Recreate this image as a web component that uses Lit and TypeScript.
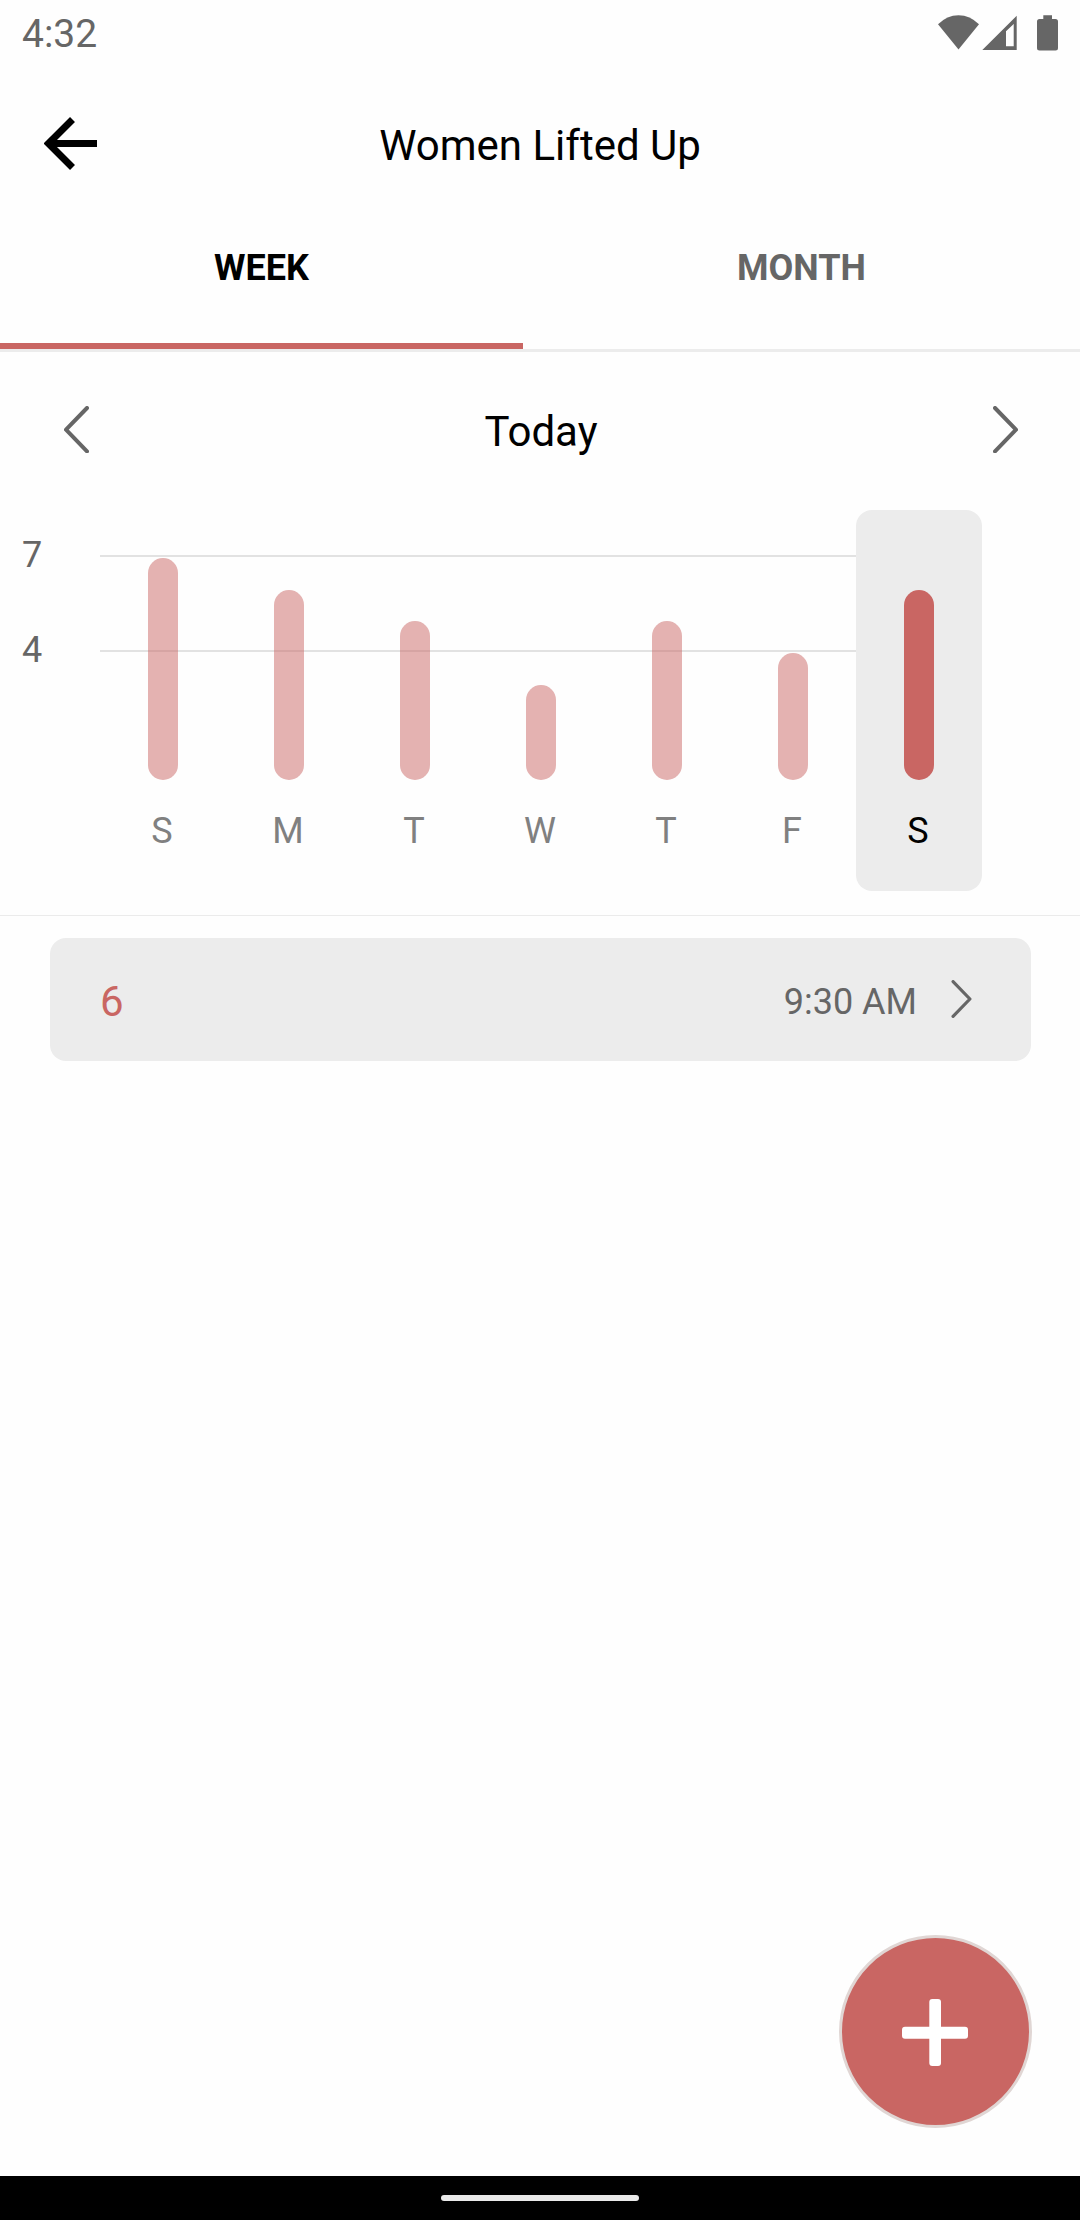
import { LitElement, html, css, svg } from "lit";
import { customElement, state } from "lit/decorators.js";
import { classMap } from "lit/directives/class-map.js";
import { styleMap } from "lit/directives/style-map.js";

interface Day {
  label: string;
  value: number;
}

const DAYS: Day[] = [
  { label: "S", value: 7 },
  { label: "M", value: 6 },
  { label: "T", value: 5 },
  { label: "W", value: 3 },
  { label: "T", value: 5 },
  { label: "F", value: 4 },
  { label: "S", value: 6 },
];

const UNIT = 31.75;

@customElement("status-bar")
class StatusBar extends LitElement {
  static styles = css`
    :host {
      display: flex;
      justify-content: space-between;
      height: 68px;
      padding-left: 22px;
      color: #666;
      font-size: 39px;
      line-height: 68px;
    }
    .icons {
      width: 150px;
      height: 68px;
      fill: #666;
    }
  `;
  render() {
    return html`
      <span>4:32</span>
      <svg class="icons" viewBox="930 0 150 68">
        <path d="M938 24.3Q947 15.2 958.5 15.2T979 24.3L958.5 49.5Z" />
        <path
          fill-rule="evenodd"
          d="M1016.7 15.7V50H982.3ZM1013.7 24L1006 31.3V46.3H1013.7Z"
        />
        <path
          d="M1043.3 15.3H1052V19H1055.5Q1058 19 1058 21.500V48Q1058 50.500 1055.500 50.500H1039.500Q1037 50.500 1037 48V21.500Q1037 19 1039.500 19H1043.300Z"
        />
      </svg>
    `;
  }
}

@customElement("week-chart")
class WeekChart extends LitElement {
  @state() private selected = 6;

  static styles = css`
    :host {
      display: grid;
      grid-template-columns: 100px 882px;
      height: 381px;
      font-size: 36px;
    }
    .axis {
      display: flex;
      flex-direction: column;
      padding: 24px 0 0 22px;
      gap: 53px;
      color: #666;
      line-height: 42px;
    }
    .plot {
      display: grid;
      grid-template-columns: repeat(7, 126px);
      grid-template-rows: 45px 96px 240px;
    }
    .line {
      grid-column: 1 / -1;
      box-sizing: border-box;
      border-bottom: 2px solid #e2e2e2;
    }
    .line.top {
      grid-row: 1;
      height: 47px;
    }
    .line.mid {
      grid-row: 2;
      height: 97px;
    }
    .day {
      grid-row: 1 / -1;
      display: flex;
      flex-direction: column;
      align-items: center;
      border-radius: 16px;
      color: #808080;
      z-index: 1;
    }
    .track {
      display: flex;
      align-items: flex-end;
      height: 270px;
    }
    .bar {
      width: 30px;
      border-radius: 15px;
      background: rgba(201, 102, 99, 0.5);
    }
    .label {
      margin-top: 30px;
      padding-right: 2px;
      line-height: 42px;
    }
    .selected {
      background: #ececec;
      color: #000;
    }
    .selected .bar {
      background: #c96663;
    }
  `;

  render() {
    return html`
      <div class="axis"><span>7</span><span>4</span></div>
      <div class="plot">
        <div class="line top"></div>
        <div class="line mid"></div>
        ${DAYS.map(
          (d, i) => html`
            <div
              class=${classMap({ day: true, selected: i === this.selected })}
              style=${styleMap({ "grid-column": String(i + 1) })}
              @click=${() => (this.selected = i)}
            >
              <div class="track">
                <div
                  class="bar"
                  style=${styleMap({ height: `${d.value * UNIT}px` })}
                ></div>
              </div>
              <span class="label">${d.label}</span>
            </div>
          `
        )}
      </div>
    `;
  }
}

const chevronRight = svg`<path d="M2 2L23 23.700L2 45.400" />`;
const chevronLeft = svg`<path d="M23 2L2 23.700L23 45.400" />`;

@customElement("app-root")
class AppRoot extends LitElement {
  static styles = css`
    :host {
      display: flex;
      flex-direction: column;
      position: relative;
      box-sizing: border-box;
      width: 1080px;
      height: 2220px;
      overflow: hidden;
      background: #fefefe;
      color: #000;
      font-family: Roboto, "Liberation Sans", sans-serif;
      font-size: 42px;
    }
    .header {
      display: grid;
      grid-template-columns: 140px 1fr 140px;
      height: 154px;
      align-items: center;
      text-align: center;
    }
    .back {
      width: 54px;
      height: 54px;
      margin: 0 0 3px 44px;
      fill: none;
      stroke: #000;
      stroke-width: 7;
      display: block;
    }
    .tabs {
      display: grid;
      grid-template-columns: 523px 557px;
      height: 127px;
      border-bottom: 3px solid #ececec;
      font-size: 36px;
      font-weight: 700;
      text-align: center;
    }
    .tab {
      box-sizing: border-box;
      padding-top: 25px;
      line-height: 42px;
      color: #666;
    }
    .tab.active {
      color: #000;
      border-bottom: 6px solid #c96663;
    }
    .range {
      display: flex;
      justify-content: space-between;
      align-items: center;
      height: 158px;
      padding: 0 62px 0 64px;
    }
    .chevron {
      width: 25px;
      height: 47.400px;
      margin-bottom: 3px;
      fill: none;
      stroke: #666;
      stroke-width: 4;
      stroke-linecap: round;
      stroke-linejoin: round;
      display: block;
    }
    .entries {
      margin-top: 24px;
      padding: 22px 49px 0 50px;
      border-top: 1px solid #ebebeb;
    }
    .entry {
      display: flex;
      align-items: center;
      height: 123px;
      box-sizing: border-box;
      padding: 4px 59px 0 100px;
      padding-left: 50px;
      border-radius: 16px;
      background: #ececec;
      color: #c96663;
    }
    .time {
      margin-left: auto;
      margin-right: 34px;
      font-size: 36px;
      color: #666;
    }
    .chevron.small {
      width: 21px;
      height: 38px;
      margin-bottom: 5px;
    }
    .add {
      position: absolute;
      left: 839px;
      top: 1935px;
      box-sizing: border-box;
      width: 193px;
      height: 193px;
      border: 3px solid #e0d6d4;
      border-radius: 50%;
      background: #c96663;
    }
    .plus {
      display: block;
      width: 187px;
      height: 187px;
      fill: #fff;
    }
    .system-nav {
      display: flex;
      align-items: center;
      justify-content: center;
      height: 44px;
      padding-bottom: 4px;
      box-sizing: border-box;
      margin-top: auto;
      background: #000;
    }
    .pill {
      width: 198px;
      height: 6px;
      margin-top: 4px;
      border-radius: 3px;
      background: #e9e9e9;
    }
  `;

  render() {
    return html`
      <status-bar></status-bar>
      <header class="header">
        <svg class="back" viewBox="44 117 54 54">
          <path d="M49 143.500H97M72.500 119.500L48.500 143.500L72.500 167.500" />
        </svg>
        <span>Women Lifted Up</span>
      </header>
      <nav class="tabs">
        <div class="tab active">WEEK</div>
        <div class="tab">MONTH</div>
      </nav>
      <div class="range">
        <svg class="chevron" viewBox="0 0 25 47.400">${chevronLeft}</svg>
        <span>Today</span>
        <svg class="chevron" viewBox="0 0 25 47.400">${chevronRight}</svg>
      </div>
      <week-chart></week-chart>
      <section class="entries">
        <div class="entry">
          <span>6</span>
          <span class="time">9:30 AM</span>
          <svg class="chevron small" viewBox="0 0 25 47.400">${chevronRight}</svg>
        </div>
      </section>
      <div class="add">
        <svg class="plus" viewBox="842 1938 187 187">
          <rect x="902" y="2026.700" width="66" height="12" rx="3" />
          <rect x="929.300" y="1999" width="11.700" height="67" rx="3" />
        </svg>
      </div>
      <footer class="system-nav"><div class="pill"></div></footer>
    `;
  }
}
